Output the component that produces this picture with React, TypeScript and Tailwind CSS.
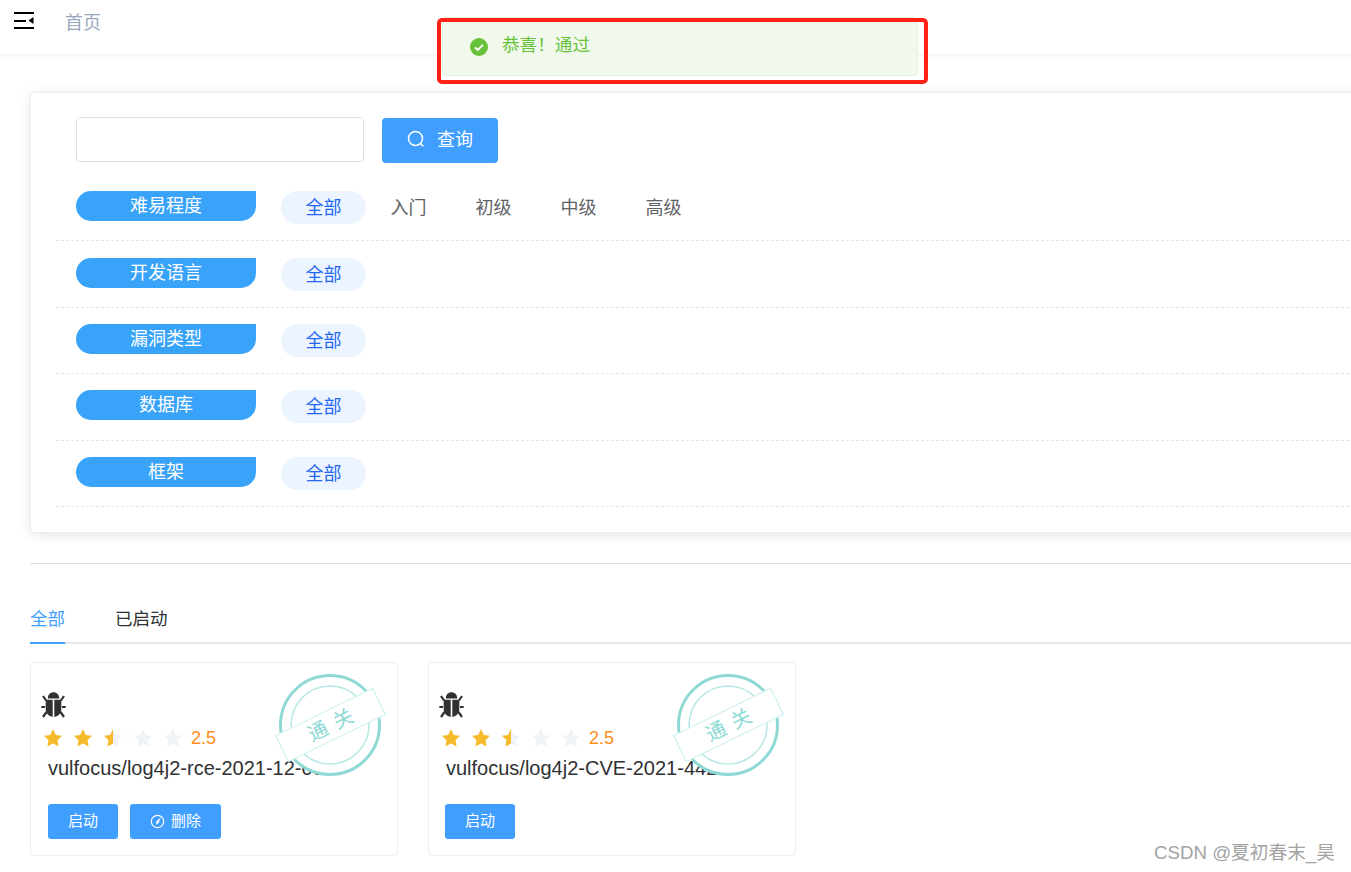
const filters = [
  { label: "难易程度", options: ["全部", "入门", "初级", "中级", "高级"] },
  { label: "开发语言", options: ["全部"] },
  { label: "漏洞类型", options: ["全部"] },
  { label: "数据库", options: ["全部"] },
  { label: "框架", options: ["全部"] },
];

const STAR = "9,0 11.8,5.9 18,6.8 13.5,11.3 14.6,17.6 9,14.6 3.4,17.6 4.5,11.3 0,6.8 6.2,5.9";
const HALF_STAR = "9,0 6.2,5.9 0,6.8 4.5,11.3 3.4,17.6 9,14.6";

function Star({ fill }: { fill: "full" | "half" | "none" }) {
  return (
    <svg width="18" height="18" viewBox="0 0 18 18">
      <polygon points={STAR} fill={fill === "full" ? "#f7ba2a" : "#eff2f7"} />
      {fill === "half" && <polygon points={HALF_STAR} fill="#f7ba2a" />}
    </svg>
  );
}

function BugIcon() {
  return (
    <svg width="25" height="26" viewBox="0 0 25 26" fill="#303133">
      {/* head */}
      <path d="M6.8 6.6C6.8 2.4 9.4.3 12.5.3s5.7 2.1 5.7 6.3z" />
      {/* body halves */}
      <path d="M4.7 7.8h7v17.2c-4.2-.6-7-3.6-7-8.2z" />
      <path d="M20.3 7.8h-7v17.2c4.2-.6 7-3.6 7-8.2z" />
      {/* legs */}
      <path
        d="M5 8.5 2 4M20 8.5 23 4M4 15H.3M21 15h3.7M5.5 20 2 25M19.5 20l3.5 5"
        stroke="#303133"
        strokeWidth="2.2"
        fill="none"
      />
    </svg>
  );
}

function Stamp() {
  return (
    <div className="absolute left-[244px] top-[7px] w-[112px] h-[110px]">
      <svg width="112" height="110" viewBox="0 0 112 110" className="absolute left-0 top-0">
        {/* the disc is opaque, it hides the end of the title */}
        <circle cx="55" cy="55" r="49.5" fill="#fff" stroke="#8fd9d5" strokeWidth="3" />
        <circle cx="55" cy="55" r="39" fill="none" stroke="#b5e8e4" strokeWidth="1.5" />
      </svg>
      <div className="absolute left-[1px] top-[40px] w-[109px] h-[30px] -rotate-[26deg] bg-white border border-[#c5eeeb] flex items-center justify-center gap-[8px] text-[20px] leading-none text-[#8dd9d5]">
        <span>通</span>
        <span>关</span>
      </div>
    </div>
  );
}

function ImageCard({ title, started, btnClass }: { title: string; started: boolean; btnClass: string }) {
  return (
    <div className="relative w-[368px] h-[194px] border border-[#ebeef5] rounded-[4px] bg-white pt-[29px]">
      <div className="ml-[10px] h-[26px]">
        <BugIcon />
      </div>
      <div className="ml-[13px] mt-[11px] h-[18px] flex items-center gap-[12px]">
        <Star fill="full" />
        <Star fill="full" />
        <Star fill="half" />
        <Star fill="none" />
        <Star fill="none" />
        <span className="-ml-[3px] text-[18px] leading-[18px] text-[#ff8d1a]">2.5</span>
      </div>
      <div className="ml-[17px] mt-[9px] text-[20px] leading-[24px] text-[#303133] whitespace-nowrap">{title}</div>
      <div className={`mt-[24px] flex gap-[12px] ${btnClass}`}>
        <button className="w-[70px] h-[35px] rounded-[3px] bg-[#409eff] text-white text-[15px] flex items-center justify-center">
          启动
        </button>
        {started && (
          <button className="w-[91px] h-[35px] rounded-[3px] bg-[#409eff] text-white text-[15px] flex items-center justify-center gap-[6px]">
            <svg width="15" height="15" viewBox="0 0 15 15" fill="none" stroke="#fff">
              <circle cx="7.5" cy="7.5" r="6.2" strokeWidth="1.2" />
              <path d="M10.2 4.6 8.4 8.6 6.4 10.4 6.6 7.4z" fill="#fff" strokeWidth="0.6" />
            </svg>
            删除
          </button>
        )}
      </div>
      <Stamp />
    </div>
  );
}

export default function App() {
  return (
    <div className="relative w-full h-[872px] overflow-hidden bg-white font-['Liberation_Sans','Noto_Sans_CJK_SC',sans-serif]">
      {/* Navbar */}
      <nav className="h-[54px] bg-white shadow-[0_1px_4px_rgba(0,21,41,0.08)] flex items-start">
        <svg width="20" height="18" viewBox="0 0 20 18" className="ml-[14px] mt-[12px]">
          <path d="M0 0h20v2H0zM0 8h12v2H0zM0 15h20v2H0z" fill="#000" />
          <path d="M19.5 5v7l-5-3.5z" fill="#000" />
        </svg>
        <span className="ml-[31px] mt-[11px] text-[18px] leading-[24px] text-[#97a8be]">首页</span>
      </nav>

      {/* Toast with the red marker around it */}
      <div className="absolute left-[442px] top-[17px] w-[476px] h-[59px] bg-[#f0f9eb] border border-[#e1f3d8] rounded-[4px] flex items-center pl-[27px]">
        <svg width="18" height="18" viewBox="0 0 18 18">
          <circle cx="9" cy="9" r="9" fill="#67c23a" />
          <path d="M5 9.3 7.8 12 13 6.8" fill="none" stroke="#fff" strokeWidth="1.8" />
        </svg>
        <span className="ml-[14px] -mt-[2px] text-[17.6px] text-[#67c23a]">恭喜！通过</span>
      </div>
      <div className="absolute left-[437px] top-[18px] w-[491px] h-[66px] border-[4px] border-[#ff2116] rounded-[5px]" />

      {/* Main */}
      <main className="pl-[30px] pt-[38px]">
        <div className="w-[1400px] h-[441px] border border-[#ebeef5] rounded-[4px] bg-white shadow-[0_2px_12px_rgba(0,0,0,0.1)] px-[25px]">
          <div className="h-[82px] pl-[20px] pt-[24px] flex items-start gap-[18px]">
            <input className="w-[288px] h-[45px] border border-[#dcdfe6] rounded-[4px] bg-white" />
            <button className="mt-px w-[116px] h-[45px] rounded-[4px] bg-[#409eff] text-white text-[18px] flex items-center justify-center gap-[12px]">
              <svg width="18" height="18" viewBox="0 0 18 18" fill="none" stroke="#fff" strokeWidth="1.5" className="-mt-[3px]">
                <circle cx="8.5" cy="8.5" r="7" />
                <path d="M13.5 13.5 16 16" strokeLinecap="round" />
              </svg>
              查询
            </button>
          </div>

          {filters.map((f) => (
            <div key={f.label} className="h-[66.4px] pl-[20px] pt-[16.2px] border-b border-dashed border-[#dce6ef] flex items-start">
              <div className="w-[180px] h-[30px] bg-[#38a3f9] rounded-l-[15px] rounded-br-[15px] text-white text-[18px] leading-[30px] text-center">
                {f.label}
              </div>
              <div className="ml-[25px] flex">
                {f.options.map((o, i) => (
                  <span
                    key={o}
                    className={
                      i === 0
                        ? "w-[85px] h-[33px] rounded-full bg-[#ecf5ff] text-[#2468f2] text-[18px] leading-[35px] text-center"
                        : "w-[85px] h-[33px] text-[#606266] text-[18px] leading-[35px] text-center"
                    }
                  >
                    {o}
                  </span>
                ))}
              </div>
            </div>
          ))}
        </div>

        <div className="mt-[30px] border-t border-[#dcdfe6]" />

        {/* Tabs */}
        <div className="flex gap-[50px] border-b-2 border-[#e4e7ed] pt-[43px]">
          <div className="-mb-[2px] pb-[11px] border-b-2 border-[#409eff] text-[17.5px] leading-[24px] text-[#409eff]">全部</div>
          <div className="pb-[11px] text-[17.5px] leading-[24px] text-[#303133]">已启动</div>
        </div>

        {/* Image cards */}
        <div className="mt-[18px] flex gap-[30px]">
          <ImageCard title="vulfocus/log4j2-rce-2021-12-09" started btnClass="ml-[17px]" />
          <ImageCard title="vulfocus/log4j2-CVE-2021-44228" started={false} btnClass="ml-[16px]" />
        </div>
      </main>

      {/* Watermark */}
      <div className="absolute left-[1154px] top-[841px] text-[18.7px] leading-[24px] text-[#a3a3a3] whitespace-nowrap">
        CSDN @夏初春末_昊
      </div>
    </div>
  );
}
